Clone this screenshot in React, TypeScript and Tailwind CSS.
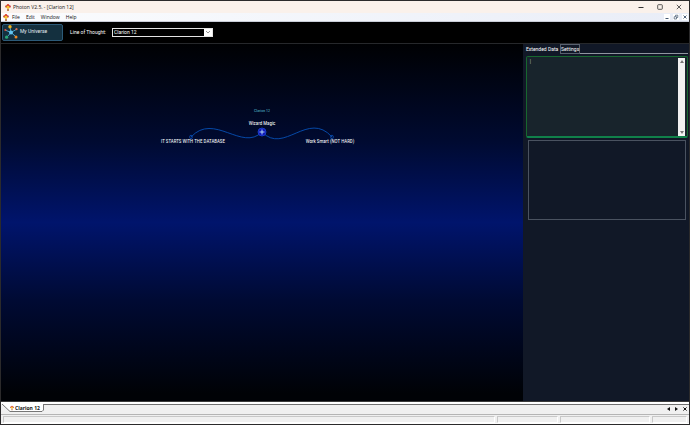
import React, { useState } from 'react';

const MENU = ['File', 'Edit', 'Window', 'Help'];

const AppIcon = ({ className = 'h-[7px] w-[6px]' }: { className?: string }) => (
  <svg viewBox="0 0 12 14" className={className} aria-hidden="true">
    <circle cx="6" cy="2.6" r="2.6" fill="#e0442c" />
    <circle cx="2.8" cy="5" r="2.4" fill="#c8502f" />
    <circle cx="9.2" cy="5" r="2.4" fill="#c03a4a" />
    <circle cx="6" cy="6.6" r="3" fill="#fbc82c" />
    <path d="M4.5 9.5h3V14h-3z" fill="#a5602b" />
  </svg>
);

const UniverseIcon = () => (
  <svg viewBox="0 0 14 14" className="h-[14px] w-[14px] shrink-0" aria-hidden="true">
    <path d="M7 7.5 6 2M7 7.5 1.6 5.2M7 7.5 12.3 4.4M7 7.5 3 12M7 7.5 11.6 11.4" stroke="#4fb2dc" strokeWidth=".9" />
    <circle cx="7" cy="7.5" r="2" fill="#63c5f0" />
    <circle cx="6" cy="1.8" r="1.7" fill="#f2b51d" />
    <circle cx="1.4" cy="5" r="1.1" fill="#e5573b" />
    <circle cx="12.5" cy="4.2" r="1.1" fill="#dc6a48" />
    <circle cx="2.6" cy="12.2" r="1.6" fill="#2aa876" />
    <circle cx="12" cy="12" r="1.5" fill="#f08a24" />
  </svg>
);

const TitleBar = () => (
  <header className="flex h-[12px] items-center bg-[#faf1eb] pl-1 pr-px text-[5px] text-[#111]">
    <AppIcon />
    <h1 className="ml-[2px] flex-1">Photon V2.5. - [Clarion 12]</h1>
    <button aria-label="Minimize" className="flex w-[19px] justify-center">
      <svg viewBox="0 0 6 6" className="h-[6px] w-[6px]"><path d="M.5 3.5h5" stroke="#333" /></svg>
    </button>
    <button aria-label="Maximize" className="flex w-[19px] justify-center">
      <svg viewBox="0 0 6 6" className="h-[6px] w-[6px]"><rect x=".7" y=".7" width="4.6" height="4.6" rx=".7" fill="none" stroke="#333" strokeWidth=".8" /></svg>
    </button>
    <button aria-label="Close" className="flex w-[19px] justify-center">
      <svg viewBox="0 0 6 6" className="h-[6px] w-[6px]"><path d="M.8.8l4.4 4.4M5.2.8.8 5.2" stroke="#333" strokeWidth=".8" /></svg>
    </button>
  </header>
);

const MenuBar = () => (
  <nav className="flex h-[9px] items-center border-b border-[#c9cdd8] bg-gradient-to-r from-[#fbfcfe] to-[#e9edf7] pl-[2px] text-[5px] text-[#111]">
    <AppIcon />
    <div className="ml-[3px] flex flex-1 gap-[6px]">
      {MENU.map((item) => (
        <button key={item}>{item}</button>
      ))}
    </div>
    <div className="flex gap-[3px] pr-px">
      <button aria-label="Minimize document" className="bg-white">
        <svg viewBox="0 0 6 6" className="h-[6px] w-[6px]"><path d="M1.5 4.5h3" stroke="#42566f" /></svg>
      </button>
      <button aria-label="Restore document" className="bg-white">
        <svg viewBox="0 0 6 6" className="h-[6px] w-[6px]"><path d="M2.5 2.5V1.2h2.3v2.3H3.7M1.2 2.7h2.3V5H1.2z" fill="none" stroke="#42566f" strokeWidth=".7" /></svg>
      </button>
      <button aria-label="Close document" className="bg-white">
        <svg viewBox="0 0 6 6" className="h-[6px] w-[6px]"><path d="M1.5 1.5l3 3M4.5 1.5l-3 3" stroke="#42566f" strokeWidth=".9" /></svg>
      </button>
    </div>
  </nav>
);

const Toolbar = () => (
  <div className="flex h-[22px] items-center border-b border-[#26282b] bg-black px-px pb-px font-['Roboto','Liberation_Sans',sans-serif] text-[5px] text-white">
    <button className="flex h-[17px] w-[61px] items-center gap-[2px] whitespace-nowrap rounded-[2px] border border-[#2c5a78] bg-[#14303f] pb-px pl-px text-[#e6eef3]">
      <UniverseIcon />
      My Universe
    </button>
    <label htmlFor="line" className="ml-[7px] w-[42px] whitespace-nowrap">Line of Thought:</label>
    <div className="relative flex h-[9px] w-[101px] border border-[#e4e4e4] bg-black">
      <select id="line" className="min-w-0 flex-1 appearance-none bg-black pl-px leading-[7px] text-white outline-none">
        <option>Clarion 12</option>
      </select>
      <span className="pointer-events-none absolute inset-y-0 right-0 flex w-2 items-center justify-center bg-white">
        <svg viewBox="0 0 6 4" className="h-1 w-[6px]"><path d="M1 1l2 2 2-2" fill="none" stroke="#777" strokeWidth=".8" /></svg>
      </span>
    </div>
  </div>
);

// Mind map, centred on the selected thought
const MindMap = () => (
  <main className="relative min-w-0 flex-1 overflow-hidden bg-[linear-gradient(180deg,#000103_0%,#000a30_27%,#00146c_50%,#000a33_72%,#000206_98%)]">
    <div className="absolute left-1/2 top-[60px] h-[50px] w-[200px] -translate-x-1/2 font-['Roboto_Condensed','Liberation_Sans',sans-serif] text-[5px] leading-[6px] text-white">
      <svg viewBox="0 0 200 50" className="absolute inset-0 h-full w-full" fill="none">
        <path d="M29 33C52 8 80 48 100 28M100 28C122 51 146 6 170 33" stroke="#0750b4" strokeWidth=".9" />
        <ellipse cx="29" cy="33" rx="1.3" ry="1.8" stroke="#0b50b8" strokeWidth=".8" />
        <ellipse cx="170" cy="33" rx="1.3" ry="1.8" stroke="#0b50b8" strokeWidth=".8" />
        <circle cx="100" cy="28" r="4" fill="#1018b8" stroke="#1c45cf" strokeWidth=".8" />
        <path d="M100 25.5v5M97.5 28h5" stroke="#bfe8f8" strokeWidth=".9" />
      </svg>
      <span className="absolute left-[100px] top-[4px] -translate-x-1/2 whitespace-nowrap text-[4px] text-[#59bfd2]">Clarion 12</span>
      <span className="absolute left-[100px] top-[16px] -translate-x-1/2 whitespace-nowrap">Wizard Magic</span>
      <span className="absolute left-[31px] top-[34px] -translate-x-1/2 whitespace-nowrap">IT STARTS WITH THE DATABASE</span>
      <span className="absolute left-[168px] top-[34px] -translate-x-1/2 whitespace-nowrap">Work Smart (NOT HARD)</span>
    </div>
  </main>
);

const SidePanel = () => {
  const [tab, setTab] = useState('data');
  return (
    <aside className="w-[166px] shrink-0 bg-[#111827] pl-[3px] pr-px">
      <div role="tablist" className="flex h-[10px] font-['Roboto','Liberation_Sans',sans-serif] text-[5px] text-white">
        <button role="tab" aria-selected={tab === 'data'} onClick={() => setTab('data')} className="w-[34px] whitespace-nowrap text-left leading-[8px]">
          Extended Data
        </button>
        <button role="tab" aria-selected={tab === 'settings'} onClick={() => setTab('settings')} className="w-[20px] whitespace-nowrap border border-[#59616f] text-left leading-[8px]">
          Settings
        </button>
        <span className="flex-1 border-b border-[#8f959f]" />
      </div>
      <div className="mt-[2px] flex h-[82px] rounded-[2px] border border-b-2 border-[#17672f] border-b-[#10814a] bg-[#18242c] pr-[2px] pt-px">
        <textarea aria-label="Extended data" defaultValue="|" className="min-w-0 flex-1 resize-none overflow-hidden bg-transparent pl-[2px] text-[5px] leading-[6px] text-[#c5cbd0] outline-none" />
        <div className="flex w-[7px] flex-col items-center justify-between bg-[#f1f1f1] py-[2px]">
          <svg viewBox="0 0 4 3" className="h-[3px] w-1"><path d="M0 3 2 0l2 3z" fill="#777" /></svg>
          <svg viewBox="0 0 4 3" className="h-[3px] w-1"><path d="M0 0h4L2 3z" fill="#777" /></svg>
        </div>
      </div>
      <div className="mx-[2px] mt-[2px] h-[80px] border border-[#4a5260] bg-[#111827]" />
    </aside>
  );
};

const DocumentTabs = () => (
  <div className="flex h-[11px] border-b border-[#b5b5b5] bg-[#f0f0f0] text-[5px] text-[#111]">
    <button className="relative flex h-[8px] w-[43px] items-center gap-px pl-[9px] font-bold">
      <svg viewBox="0 0 43 8" className="absolute inset-0 h-full w-full" fill="#fff">
        <path d="M1 0 9 7.5h32l1.5-1.5V0" stroke="#555" strokeWidth=".8" />
      </svg>
      <AppIcon className="relative h-[6px] w-1" />
      <span className="relative whitespace-nowrap">Clarion 12</span>
    </button>
    <div className="flex flex-1 items-center justify-end gap-[5px] border-t border-[#707070] pb-px pr-[2px]">
      <button aria-label="Previous"><svg viewBox="0 0 3 4" className="h-1 w-[3px]"><path d="M3 0v4L0 2z" fill="#111" /></svg></button>
      <button aria-label="Next"><svg viewBox="0 0 3 4" className="h-1 w-[3px]"><path d="M0 0v4l3-2z" fill="#111" /></svg></button>
      <button aria-label="Close tab"><svg viewBox="0 0 4 4" className="h-1 w-1"><path d="M.4.4l3.2 3.2M3.6.4.4 3.6" stroke="#111" /></svg></button>
    </div>
  </div>
);

const StatusBar = () => (
  <footer className="flex h-[9px] gap-[2px] border-b border-white bg-[#f0f0f0] pl-[2px] pr-[2px] pt-px">
    <span className="flex-1 border border-[#c8c8c8] border-b-white border-r-white" />
    <span className="w-[61px] border border-[#c8c8c8] border-b-white border-r-white" />
    <span className="w-[90px] border border-[#c8c8c8] border-b-white border-r-white" />
    <span className="w-[35px] border border-[#c8c8c8] border-b-white border-r-white" />
  </footer>
);

export default function App() {
  return (
    <div className="flex min-h-screen flex-col border border-[#2b2a2b] font-['Open_Sans','Liberation_Sans',sans-serif] leading-[7px]">
      <TitleBar />
      <MenuBar />
      <Toolbar />
      <div className="flex flex-1 border-b border-[#3b3b3b]">
        <MindMap />
        <SidePanel />
      </div>
      <div className="h-[2px] bg-white" />
      <DocumentTabs />
      <StatusBar />
    </div>
  );
}
